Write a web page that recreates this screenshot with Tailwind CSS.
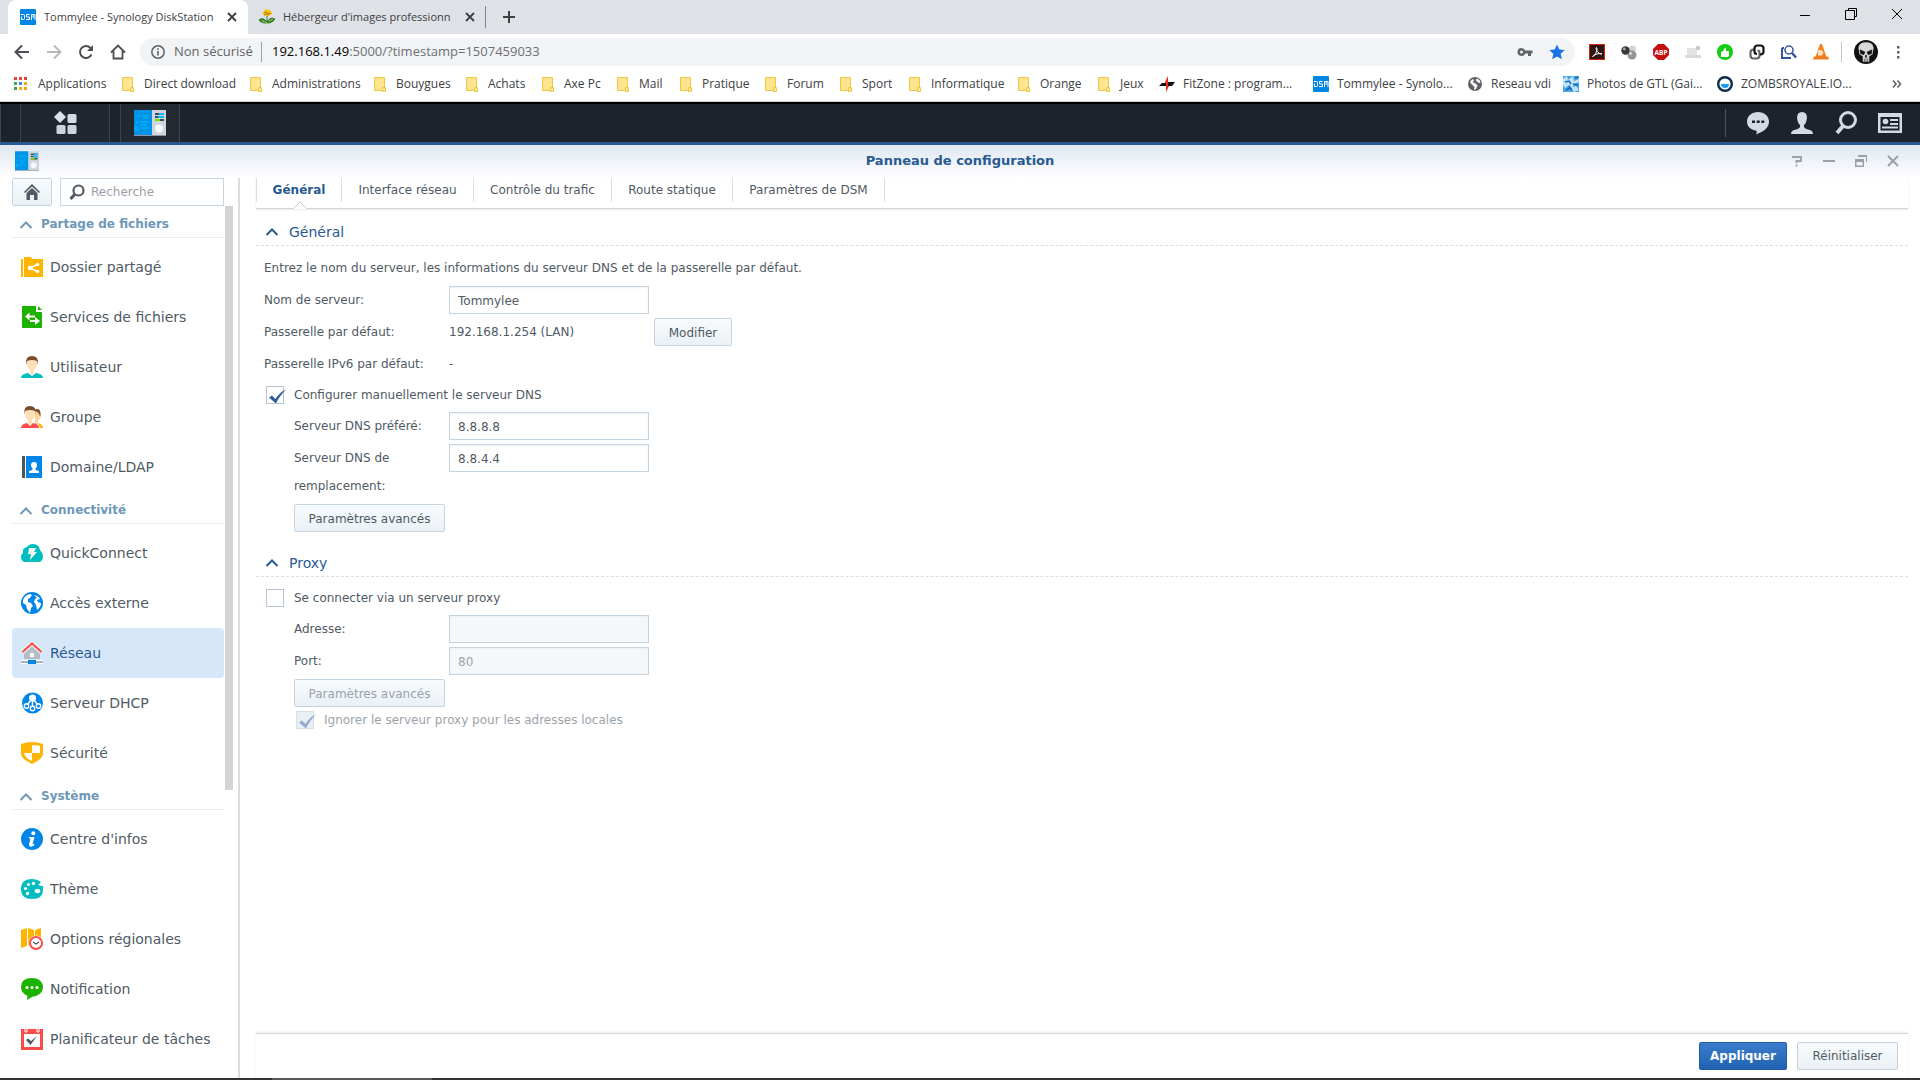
<!DOCTYPE html>
<html lang="fr">
<head>
<meta charset="utf-8">
<title>Tommylee - Synology DiskStation</title>
<script src="https://cdn.jsdelivr.net/npm/@tailwindcss/browser@4"></script>
</head>
<body class="flex h-screen flex-col overflow-hidden bg-white font-['DejaVu_Sans',sans-serif] text-[12px] text-[#505a64]">

<svg class="hidden" aria-hidden="true">
  <defs>
    <symbol id="folder" viewBox="0 0 12 16"><path d="M.5 1.5h10v13H.5z" fill="#ffe58f" stroke="#ecc846"/><path d="M8.500 11.500h3v4h-3z" fill="#ffe58f" stroke="#ecc846"/></symbol>
    <symbol id="dsm" viewBox="0 0 16 16"><rect width="16" height="16" rx="1" fill="#0086e5"/><path d="M1 5.500h2.500q1 0 1 1v3q0 1-1 1H1.500V7.500M9.500 5.500h-3v2.500h3v2.500H6M11.500 11V5.500h3.500V11M13.200 5.500V9" fill="none" stroke="#fff" stroke-width="1"/></symbol>
    <symbol id="panel" viewBox="0 0 32 26"><path d="M0 0h18v25H0z" fill="#0094e8"/><path d="M18 0h14v25H18z" fill="#cfd5db"/><path d="M2 6l1 1 2-2M2 12l1 1 2-2M6 6h9M6 12h9M6 15h6M6 18h9M9 8h5" fill="none" stroke="#00b9ff"/><circle cx="2.500" cy="18.500" r="1.500" fill="none" stroke="#00c8ff"/><path d="M21 3h9v2h-9zM21 6h9v2h-9zM21 9h9v2h-9z" fill="#3d4c58"/><path d="M25 3h5v2h-5zM24 6h6v2h-6z" fill="#00bdf2"/><path d="M21 9h5v2h-5z" fill="#7be000"/><circle cx="25" cy="18.500" r="4" fill="#f4fafb"/><path d="M0 25h32v1H0z" fill="#8b98a3"/></symbol>
    <symbol id="close" viewBox="0 0 10 10"><path d="M1 1l8 8M9 1L1 9" fill="none" stroke="currentColor" stroke-width="1.800"/></symbol>
    <symbol id="up" viewBox="0 0 14 10"><path d="M1.500 8L7 2.500 12.500 8" fill="none" stroke="currentColor" stroke-width="2"/></symbol>
    <symbol id="check" viewBox="0 0 20 18"><path d="M2 9.500l3-2 3.500 3.500C11 7 15 3 19 1.500 15 5.500 11.500 10 9 15.500z" fill="currentColor"/></symbol>
  </defs>
</svg>

<header class="shrink-0 font-['Open_Sans',sans-serif] text-[#3c4043]">
  <div class="flex h-[34px] bg-[#dee1e6] pl-2">
    <div class="flex w-60 items-center justify-between rounded-t-lg bg-white pl-3 pr-[7px]">
      <div class="flex items-center gap-2 whitespace-nowrap text-[11px]"><svg class="size-4 shrink-0"><use href="#dsm"/></svg>Tommylee - Synology DiskStation</div>
      <button class="p-1" aria-label="Fermer l'onglet"><svg class="size-2.5"><use href="#close"/></svg></button>
    </div>
    <div class="my-1.5 flex w-[238px] items-center justify-between border-r border-[#80868b] pl-[11px] pr-1.5">
      <div class="flex items-center gap-2 whitespace-nowrap text-[11px]"><svg class="size-4 shrink-0" viewBox="0 0 16 16"><path d="M8 7v7M8 13C5 9 2 9 0 11c2 3 5 3 8 3 3 0 6-1 8-4-4-2-6 0-8 3z" fill="#3c8a2e" stroke="#1f5a1a" stroke-width=".8"/><path d="M4 3l3-3 4 1 2 3-1 2-4 1-4-1z" fill="#f6c517"/><path d="M5 4l2-1 3 2 2-1M5 6l2-1 3 1" fill="none" stroke="#b77b0b"/><path d="M3 12l3 1 5 2M10 12l4-2" stroke="#8fd060" fill="none"/></svg>Hébergeur d'images professionn</div>
      <button class="p-1" aria-label="Fermer l'onglet"><svg class="size-2.5"><use href="#close"/></svg></button>
    </div>
    <button class="ml-4 self-center" aria-label="Nouvel onglet"><svg class="size-3.5" viewBox="0 0 14 14"><path d="M7 1v12M1 7h12" stroke="#3c4043" stroke-width="2"/></svg></button>
    <div class="ml-auto flex">
      <button class="flex w-[46px] items-center justify-center pb-1" aria-label="Réduire"><svg class="size-2.5" viewBox="0 0 10 10"><path d="M0 5.500h10" stroke="#000"/></svg></button>
      <button class="flex w-[46px] items-center justify-center pb-1.5" aria-label="Restaurer"><svg class="size-3" viewBox="0 0 12 12"><path d="M3.500 2.500v-2h8v8h-2M.5 2.500h9v9h-9z" fill="none" stroke="#000"/></svg></button>
      <button class="flex w-[46px] items-center justify-center pb-1.5" aria-label="Fermer"><svg class="size-3" viewBox="0 0 12 12"><path d="M1 1l10 10M11 1L1 11" stroke="#000"/></svg></button>
    </div>
  </div>
  <div class="flex h-9 items-center bg-white pl-3.5 pr-4">
    <button class="w-8" aria-label="Retour"><svg class="size-4" viewBox="0 0 16 16"><path d="M15 8H2M8 1.500L1.500 8 8 14.500" fill="none" stroke="#4b4f54" stroke-width="2"/></svg></button>
    <button class="w-8" aria-label="Avancer"><svg class="size-4" viewBox="0 0 16 16"><path d="M1 8h13M8 1.500L14.500 8 8 14.500" fill="none" stroke="#b7babd" stroke-width="2"/></svg></button>
    <button class="w-8" aria-label="Actualiser"><svg class="size-4" viewBox="0 0 16 16"><path d="M13.500 10.500A6 6 0 1 1 12.500 4" fill="none" stroke="#4b4f54" stroke-width="2"/><path d="M15 1v6H9z" fill="#4b4f54"/></svg></button>
    <button class="w-[30px]" aria-label="Accueil"><svg class="size-4" viewBox="0 0 16 16"><path d="M1 8.500L8 1.500l7 7M3.500 7v7.500h9V7" fill="none" stroke="#4b4f54" stroke-width="1.800"/></svg></button>
    <div class="flex h-7 flex-1 items-center rounded-full bg-[#f1f3f4] px-2.5">
      <svg class="size-4" viewBox="0 0 16 16"><circle cx="8" cy="8" r="6.200" fill="none" stroke="#5f6368" stroke-width="1.500"/><path d="M8 7v4.500M8 4.200v1.600" stroke="#5f6368" stroke-width="1.600"/></svg>
      <span class="ml-2 w-20 whitespace-nowrap text-[13px] text-[#5f6368]">Non sécurisé</span>
      <span class="ml-[7px] h-5 w-px bg-[#9aa0a6]"></span>
      <div class="ml-2.5 flex-1 text-[13px] text-[#6c7075]" role="textbox" contenteditable="true" spellcheck="false" aria-label="Adresse du site"><span class="text-black">192.168.1.49</span>:5000/?timestamp=1507459033</div>
      <svg class="mr-4 h-4 w-4" viewBox="0 0 16 16"><path d="M4.500 4a4 4 0 1 0 3.700 5.500H11V12h3V9.500h1.500v-3H8.200A4 4 0 0 0 4.500 4zm0 2.500a1.500 1.500 0 1 1 0 3 1.500 1.500 0 0 1 0-3z" fill="#5f6368"/></svg>
      <svg class="size-4" viewBox="0 0 16 16"><path d="M8 .5l2.300 5 5.400.6-4 3.700 1.100 5.400L8 12.500l-4.800 2.700 1.100-5.400-4-3.700 5.400-.6z" fill="#1a73e8"/></svg>
    </div>
    <div class="ml-3.5 flex items-center gap-4">
      <svg class="size-4" viewBox="0 0 16 16"><path d="M.5.500h15v15H.5z" fill="#301515" stroke="#d3210b"/><path d="M3.500 12.500C7 11 9 5 7.500 3.500 6 5 9 10 13 10c-3-1-7 0-9.500 2.500z" fill="none" stroke="#fff"/></svg>
      <svg class="size-4" viewBox="0 0 16 16"><circle cx="11.500" cy="5" r="3.500" fill="#d2d2d2"/><circle cx="11" cy="11" r="4.500" fill="#949494"/><circle cx="4.500" cy="6.500" r="4.200" fill="#383838"/><circle cx="3.300" cy="5" r="1.400" fill="#aaa"/><circle cx="9.500" cy="9.500" r="1.400" fill="#ddd"/></svg>
      <svg class="size-4" viewBox="0 0 16 16"><path d="M5 0h6l5 5v6l-5 5H5l-5-5V5z" fill="#c70d0d"/><text x="8" y="10.500" font-size="6.500" font-weight="700" text-anchor="middle" fill="#fff">ABP</text></svg>
      <svg class="size-4" viewBox="0 0 16 16"><path d="M2 4h10v7H2z" fill="#e4e4e4"/><path d="M0 11h16v3H0z" fill="#dadada"/><circle cx="13" cy="4" r="2.300" fill="#c7c7c7"/></svg>
      <svg class="size-4" viewBox="0 0 16 16"><circle cx="8" cy="8" r="8" fill="#12cd12"/><path d="M4 7.500h2L8 3.500q1.500.5 1 3.500h3v5l-1 1H4z" fill="#fff"/></svg>
      <svg class="size-4" viewBox="0 0 16 16"><g fill="none" stroke-width="2.200"><path d="M5 5.500H4.500a3 3 0 0 0-3 3v3a3 3 0 0 0 3 3h3a3 3 0 0 0 3-3V8.500q0-2-2-2" stroke="#666"/><path d="M11 10.500h.5a3 3 0 0 0 3-3v-3a3 3 0 0 0-3-3h-3a3 3 0 0 0-3 3v3q0 2.500 2.500 2.500" stroke="#111"/></g></svg>
      <svg class="size-4" viewBox="0 0 16 16"><g fill="none" stroke="#34559c"><path d="M1 4v10h9M3 4H1" stroke-width="2"/><circle cx="8" cy="6" r="4" stroke-width="1.500"/><path d="M11 9l4 4.500" stroke-width="2.500"/></g></svg>
      <svg class="size-4" viewBox="0 0 16 16"><path d="M7 0h2l4.500 13h-11z" fill="#f58220"/><path d="M5.500 6h3l2 3-2 2.500H5V9H4.500z" fill="#fbe3cb"/><path d="M1 12.500h14l1 3H0z" fill="#ef7c1c"/></svg>
    </div>
    <span class="ml-3 h-5 w-px bg-[#c4c7ca]"></span>
    <svg class="ml-3 size-6" viewBox="0 0 22 22"><circle cx="11" cy="11" r="11" fill="#111"/><path d="M4 7q1-5 7-5t7 5l-1 6-3 2v5H8v-5l-3-2z" fill="#d8d8d8"/><path d="M5.500 9l4.500 2-1 2.500-3-1zM16.500 9L12 11l1 2.500 3-1zM10.500 14h1v2h-1zM9.500 17v3M11 17v3M12.500 17v3" fill="#111" stroke="#111" stroke-width=".5"/></svg>
    <button class="ml-2.5 w-4" aria-label="Menu"><svg class="h-4 w-4" viewBox="0 0 16 16"><path d="M9 2h2.500v2.500H9zM9 7h2.500v2.500H9zM9 12h2.500v2.500H9z" fill="#5f6368"/></svg></button>
  </div>
  <nav class="flex h-8 items-center whitespace-nowrap bg-white pb-1 pl-3.5 text-[12px]" aria-label="Favoris">
    <a href="#" class="flex w-27 items-center gap-2.5"><svg class="size-3.5" viewBox="0 0 14 14"><path d="M0 0h3v3H0zM5 0h3v3H5zM10 0h3v3h-3z" fill="#ea4335"/><path d="M0 5h3v3H0z" fill="#34a853"/><path d="M5 5h3v3H5z" fill="#4285f4"/><path d="M10 5h3v3h-3zM5 10h3v3H5zM10 10h3v3h-3z" fill="#fbaa05"/><path d="M0 10h3v3H0z" fill="#34a853"/></svg>Applications</a>
    <a href="#" class="flex w-32 items-center gap-2.5"><svg class="h-4 w-3"><use href="#folder"/></svg>Direct download</a>
    <a href="#" class="flex w-31 items-center gap-2.5"><svg class="h-4 w-3"><use href="#folder"/></svg>Administrations</a>
    <a href="#" class="flex w-[92px] items-center gap-2.5"><svg class="h-4 w-3"><use href="#folder"/></svg>Bouygues</a>
    <a href="#" class="flex w-19 items-center gap-2.5"><svg class="h-4 w-3"><use href="#folder"/></svg>Achats</a>
    <a href="#" class="flex w-[75px] items-center gap-2.5"><svg class="h-4 w-3"><use href="#folder"/></svg>Axe Pc</a>
    <a href="#" class="flex w-[63px] items-center gap-2.5"><svg class="h-4 w-3"><use href="#folder"/></svg>Mail</a>
    <a href="#" class="flex w-[85px] items-center gap-2.5"><svg class="h-4 w-3"><use href="#folder"/></svg>Pratique</a>
    <a href="#" class="flex w-[75px] items-center gap-2.5"><svg class="h-4 w-3"><use href="#folder"/></svg>Forum</a>
    <a href="#" class="flex w-[69px] items-center gap-2.5"><svg class="h-4 w-3"><use href="#folder"/></svg>Sport</a>
    <a href="#" class="flex w-[109px] items-center gap-2.5"><svg class="h-4 w-3"><use href="#folder"/></svg>Informatique</a>
    <a href="#" class="flex w-20 items-center gap-2.5"><svg class="h-4 w-3"><use href="#folder"/></svg>Orange</a>
    <a href="#" class="flex w-[61px] items-center gap-2.5"><svg class="h-4 w-3"><use href="#folder"/></svg>Jeux</a>
    <a href="#" class="flex w-[154px] items-center gap-2"><svg class="size-4" viewBox="0 0 16 16"><path d="M6 6L9 0v6h1v4l-3 6V10z" fill="#ea2a1c"/><path d="M0 10l3-3h4v3zM9 6h7l-3 4H9z" fill="#111"/></svg>FitZone : program...</a>
    <a href="#" class="flex w-[154px] items-center gap-2"><svg class="size-4"><use href="#dsm"/></svg>Tommylee - Synolo...</a>
    <a href="#" class="flex w-24 items-center gap-2"><svg class="size-4" viewBox="0 0 16 16"><circle cx="8" cy="8" r="7" fill="#5f6368"/><path d="M3 6.500q1-3 3-3.500l1 1.500L5.500 6l3 1.500 2 2-1.500 3.500-2 1 .5-3-2.500-2.500zM9.500 2.500l3 1.500 1 3-2.500-.5L9 4.500z" fill="#fff"/></svg>Reseau vdi</a>
    <a href="#" class="flex w-[154px] items-center gap-2"><svg class="size-4" viewBox="0 0 16 16"><path d="M0 0h16v16H0z" fill="#4aa3e6"/><path d="M0 3l4-3 1 4 5-4 1 5 5-2v3l-5 2-2 5-3-4-4 3-2-3zM8 12l5-2 3 4-5 2z" fill="#bfe3fb"/><path d="M2 6l4-1 2 3M10 8l5 1M3 14l4-2M12 2l3-1M6 10l3 4" stroke="#1669b8" fill="none" stroke-width="1.500"/></svg>Photos de GTL (Gai...</a>
    <a href="#" class="flex w-40 items-center gap-2"><svg class="size-4" viewBox="0 0 16 16"><circle cx="8" cy="8" r="6.800" fill="#fff" stroke="#0c2a4c" stroke-width="2.400"/><path d="M4 8h8a4 4 0 0 1-8 0z" fill="#1c9bf0"/></svg>ZOMBSROYALE.IO...</a>
    <button class="ml-auto mr-[18px]" aria-label="Autres favoris"><svg class="h-2.5 w-2.5" viewBox="0 0 10 10"><path d="M1 1.500L4 5 1 8.500M5.500 1.500l3 3.500-3 3.500" fill="none" stroke="#5f6368" stroke-width="1.600"/></svg></button>
  </nav>
</header>

<div class="flex h-[43px] shrink-0 border-b-3 border-t-2 border-b-[#285a91] border-t-black bg-[#1d232b] shadow-[0_-1px_0_#d5d7d9]">
  <span class="w-[21px] border-x border-[#3b434c]"></span>
  <button class="flex w-[89px] items-center justify-center border-r border-[#3b434c] bg-[#20272f]" aria-label="Menu principal"><svg class="size-6" viewBox="0 0 24 24"><path d="M7 0l6 6-6 6-6-6z" fill="#dbe3ee"/><rect x="14.500" y="3" width="9" height="9" rx="1.500" fill="#d3dbe4"/><rect x="3.500" y="14" width="9" height="9" rx="1.500" fill="#ccd4dc"/><rect x="14.500" y="14" width="9" height="9" rx="1.500" fill="#ccd4dc"/></svg></button>
  <button class="ml-2.5 flex w-[60px] items-center justify-center border-x border-[#3b434c] bg-[#222931]" aria-label="Panneau de configuration"><svg class="h-[26px] w-8"><use href="#panel"/></svg></button>
  <div class="ml-auto flex items-center pr-[18px]">
    <span class="h-7 w-px bg-[#4b525a]"></span>
    <button class="ml-5" aria-label="Notifications"><svg class="size-6" viewBox="0 0 24 24"><path d="M12 1c6 0 11 4 11 9.500 0 6-5 10-13 13 1-2 1-3 0-4C5 19 1 15.500 1 10.500 1 5 6 1 12 1z" fill="#d2dae4"/><path d="M6 9.500h3v2.500H6zM10.700 9.500h3v2.500h-3zM15.300 9.500h3v2.500h-3z" fill="#1d232b"/></svg></button>
    <button class="ml-5" aria-label="Options"><svg class="size-6" viewBox="0 0 24 24"><path d="M12 1q5 0 5 6-1 6-3 7v2q1 2 6 3 3 1 3 4H1q0-3 3-4 5-1 6-3v-2q-2-1-3-7 0-6 5-6z" fill="#d2dae4"/></svg></button>
    <button class="ml-5" aria-label="Rechercher"><svg class="size-6" viewBox="0 0 24 24"><ellipse cx="14" cy="9" rx="7.500" ry="7.500" fill="none" stroke="#d2dae4" stroke-width="3"/><path d="M9 15l-6 7" stroke="#d2dae4" stroke-width="4"/></svg></button>
    <button class="ml-5" aria-label="Widgets"><svg class="size-6" viewBox="0 0 24 24"><path d="M0 2h24v20H0z" fill="#d2dae4"/><path d="M2.500 6h19v13.500h-19z" fill="#1d232b"/><circle cx="7.500" cy="10.500" r="2.800" fill="#d2dae4"/><path d="M12 8h8v2h-8zM12 12h8v2h-8zM4 15.500h16v2H4z" fill="#d2dae4"/></svg></button>
  </div>
</div>

<div class="flex min-h-0 flex-1 flex-col">
  <div class="grid h-[33px] shrink-0 grid-cols-[1fr_auto_1fr] items-center bg-linear-to-b from-[#e0e7f2] to-white pb-0.5 pl-[15px] pr-[21px]">
    <svg class="h-5 w-6"><use href="#panel"/></svg>
    <h1 class="pl-1.5 text-center text-[13px] font-bold text-[#285a91]">Panneau de configuration</h1>
    <div class="flex justify-end gap-5 text-[#9aa1a8]">
      <button aria-label="Aide"><svg class="size-3" viewBox="0 0 12 12"><path d="M1 2h9v4H5.500v2M5.500 9.500v2" fill="none" stroke="currentColor" stroke-width="1.800"/></svg></button>
      <button aria-label="Réduire"><svg class="size-3" viewBox="0 0 12 12"><path d="M0 6h12" stroke="currentColor" stroke-width="2"/></svg></button>
      <button aria-label="Restaurer"><svg class="size-3" viewBox="0 0 12 12"><path d="M3 0h9v7h-1V2H3zM0 4h9v8H0zM1.500 7v3.500h6V7z" fill="currentColor" fill-rule="evenodd"/></svg></button>
      <button aria-label="Fermer"><svg class="size-3" viewBox="0 0 12 12"><path d="M1 1l10 10M11 1L1 11" stroke="currentColor" stroke-width="2"/></svg></button>
    </div>
  </div>

  <div class="flex min-h-0 flex-1">
    <aside class="flex w-60 shrink-0 flex-col border-r-2 border-[#dcdcdc] pl-3">
      <div class="flex h-7 shrink-0 gap-2 pr-3.5">
        <button class="flex w-10 items-center justify-center rounded-xs border border-[#c6d4e0] bg-linear-to-b from-[#f7fbfe] to-[#ebf1f6]" aria-label="Accueil"><svg class="size-4" viewBox="0 0 16 16"><path d="M0 8L8 0l8 8-1 1-7-6.500L1 9z" fill="#505a64"/><path d="M2.500 9L8 4l5.500 5v7H10v-5H6v5H2.500z" fill="#505a64"/></svg></button>
        <div class="flex flex-1 items-center border border-[#c6d4e0] bg-white pl-2">
          <svg class="size-4 shrink-0" viewBox="0 0 16 16"><circle cx="9.500" cy="6.500" r="5" fill="none" stroke="#505a64" stroke-width="2.200"/><path d="M6 10l-4.500 5" stroke="#505a64" stroke-width="3"/></svg>
          <input type="text" aria-label="Recherche" placeholder="Recherche" class="ml-1.5 w-0 flex-1 text-[12px] outline-none placeholder:text-[#9aa1a8]">
        </div>
      </div>
      <div class="flex min-h-0 flex-1 overflow-hidden">
        <nav class="w-[212px] shrink-0 text-[14px]">
          <h2 class="mb-1 flex h-8 items-center gap-2 border-b border-[#ebedef] pl-[7px] pt-1 text-[12px] font-bold text-[#6e97b9]"><svg class="mt-0.5 h-2.5 w-3.5"><use href="#up"/></svg>Partage de fichiers</h2>
          <a href="#" class="flex h-[50px] items-center gap-[7px] pl-[9px]"><svg class="size-[22px]" viewBox="0 0 22 22"><path d="M0 3h2v18H0zM3 1h7l1 2h11v18H3z" fill="#ffb400"/><path d="M16.500 8.500L9 12l7.500 3.500" fill="none" stroke="#fff" stroke-width="1.500"/><circle cx="9" cy="12" r="2.400" fill="#fff"/><circle cx="16.500" cy="8.500" r="1.800" fill="#fff"/><circle cx="16.500" cy="15.500" r="1.800" fill="#fff"/></svg>Dossier partagé</a>
          <a href="#" class="flex h-[50px] items-center gap-[7px] pl-[9px]"><svg class="size-[22px]" viewBox="0 0 22 22"><path d="M1 0h14v6h6v16H1z" fill="#1db100"/><path d="M17 0l4 4h-4z" fill="#1db100"/><path d="M7 10.500h7M9 15h6" stroke="#fff" stroke-width="2"/><path d="M8.500 6.500v8L4 10.500zM14 11v8l5-4z" fill="#fff"/></svg>Services de fichiers</a>
          <a href="#" class="flex h-[50px] items-center gap-[7px] pl-[9px]"><svg class="size-[22px]" viewBox="0 0 22 22"><path d="M0 22q0-4 7-5l4 3 4-3q7 1 7 5z" fill="#00bdc0"/><path d="M6 6q0-4 5-4t5 4-1 6l-2 2v3l-2 2.500L9 17v-3l-2-2q-1-2-1-6z" fill="#ffdfb8"/><path d="M5 9Q4 0 11 0t6 9l-1-4q-5-2-10 0z" fill="#7a4d29"/></svg>Utilisateur</a>
          <a href="#" class="flex h-[50px] items-center gap-[7px] pl-[9px]"><svg class="size-[22px]" viewBox="0 0 22 22"><path d="M14 7q4-3 5 1t-2 7v3l-3 1z" fill="#ffd49a"/><path d="M13 4q6-3 6.500 3v4l-2-4z" fill="#7a4d29"/><path d="M17 17q5 1 5 5h-3z" fill="#ffb400"/><path d="M0 22q0-4 6-5l3 3 3-3q6 1 6 5z" fill="#fb4b4b"/><path d="M4 6q0-4 5-4t5 4-1 6l-2 2v3l-2 2.500L7 17v-3l-2-2Q4 10 4 6z" fill="#ffdfb8"/><path d="M3.500 9Q2 0 9 0t5.500 9L14 5Q9 3 4 5z" fill="#7a4d29"/></svg>Groupe</a>
          <a href="#" class="flex h-[50px] items-center gap-[7px] pl-[9px]"><svg class="size-[22px]" viewBox="0 0 22 22"><path d="M1 0h3v22H1z" fill="#4a5560"/><path d="M5 0h16v22H5z" fill="#0086e9"/><path d="M13 6q3 0 3 3 0 2-1.500 3.500V14l3.500 1v2H8v-2l3.500-1v-1.500Q10 11 10 9q0-3 3-3z" fill="#fff"/></svg>Domaine/LDAP</a>

          <h2 class="mb-1 flex h-8 items-center gap-2 border-b border-[#ebedef] pl-[7px] pt-1 text-[12px] font-bold text-[#6e97b9]"><svg class="mt-0.5 h-2.5 w-3.5"><use href="#up"/></svg>Connectivité</h2>
          <a href="#" class="flex h-[50px] items-center gap-[7px] pl-[9px]"><svg class="size-[22px]" viewBox="0 0 22 22"><path d="M5 20q-5 0-5-5 0-3 2-4-1-5 4-6 2-3 6-3 6 0 7 6 3 3 3 6 0 6-5 6z" fill="#00bdc0"/><path d="M8 6h7l-2 4h3l-7 8 1-6H7z" fill="#fff"/></svg>QuickConnect</a>
          <a href="#" class="flex h-[50px] items-center gap-[7px] pl-[9px]"><svg class="size-[22px]" viewBox="0 0 22 22"><circle cx="11" cy="11" r="11" fill="#0086e9"/><path d="M2 8q2-5 7-6l2 1-2 3-2 1v3l3 1 2 3-2 2-1 5-3-4-1-4-3-2zM13 3q5 1 6 4l-3 1 1 2 3 1q0 4-4 7l-1-5-2-3 1-3 2-1z" fill="#fff"/></svg>Accès externe</a>
          <a href="#" aria-current="page" class="flex h-[50px] items-center gap-[7px] rounded-sm bg-[#d6e7f9] pl-[9px] text-[#285a91]"><svg class="size-[22px]" viewBox="0 0 22 22"><path d="M3 10l8-7 8 7v7H3z" fill="#b3bdc7"/><path d="M1.500 10L11 1.500l9.500 8.500" fill="none" stroke="#fff" stroke-width="4"/><path d="M1.500 10L11 1.500l9.500 8.500" fill="none" stroke="#fb4b4b" stroke-width="2.200"/><path d="M9 11h4v4H9z" fill="#fff"/><path d="M0 18h22v4H0z" fill="#fff"/><path d="M0 19h22v2H0z" fill="#a7b1bb"/><path d="M7 18h8v4H7z" fill="#0086e9"/></svg>Réseau</a>
          <a href="#" class="flex h-[50px] items-center gap-[7px] pl-[9px]"><svg class="size-[22px]" viewBox="0 0 22 22"><circle cx="11.500" cy="11" r="10.500" fill="#0086e9"/><circle cx="11.500" cy="6" r="3.500" fill="#fff"/><path d="M10 8l-4 5M11.500 8v6M13 8l4 5" stroke="#fff" stroke-width="1.500"/><g fill="#0086e9" stroke="#fff" stroke-width="1.400"><circle cx="5.500" cy="14" r="2.200"/><circle cx="11.500" cy="16.500" r="2.200"/><circle cx="17.500" cy="14" r="2.200"/></g></svg>Serveur DHCP</a>
          <a href="#" class="flex h-[50px] items-center gap-[7px] pl-[9px]"><svg class="size-[22px]" viewBox="0 0 22 22"><path d="M0 2q11-4 22 0v9q0 6-11 11Q0 17 0 11z" fill="#ffb400"/><path d="M11 3q4 0 8 1v7h-8zM3 11h8v8q-7-3-8-8z" fill="#fff"/><path d="M5 5q3-1 6-1v7H5zM11 11h6q-1 4-6 6z" fill="#ffb400"/></svg>Sécurité</a>

          <h2 class="mb-1 flex h-8 items-center gap-2 border-b border-[#ebedef] pl-[7px] pt-1 text-[12px] font-bold text-[#6e97b9]"><svg class="mt-0.5 h-2.5 w-3.5"><use href="#up"/></svg>Système</h2>
          <a href="#" class="flex h-[50px] items-center gap-[7px] pl-[9px]"><svg class="size-[22px]" viewBox="0 0 22 22"><circle cx="11" cy="11" r="11" fill="#0086e9"/><circle cx="12.300" cy="5.200" r="2" fill="#fff"/><path d="M8 9h5.500l-2 7.500 2-1-.5 2q-5 3-5-1l1.500-6H8z" fill="#fff"/></svg>Centre d'infos</a>
          <a href="#" class="flex h-[50px] items-center gap-[7px] pl-[9px]"><svg class="size-[22px]" viewBox="0 0 22 22"><path d="M11 1q5 0 9 3l-3 3q2 1 5 1v4q0 9-11 9Q0 21 0 11 0 1 11 1z" fill="#00bdc0"/><g fill="#fff"><ellipse cx="16.500" cy="13" rx="2.800" ry="2.200"/><circle cx="6.500" cy="15.500" r="1.700"/><circle cx="4.500" cy="10.500" r="1.600"/><circle cx="7.500" cy="6.500" r="1.600"/><circle cx="12.500" cy="5.500" r="1.700"/></g></svg>Thème</a>
          <a href="#" class="flex h-[50px] items-center gap-[7px] pl-[9px]"><svg class="size-[22px]" viewBox="0 0 22 22"><path d="M0 2l6-2v18l-6 2zM7 0l6 2v17l-6-2zM14 2l6-2v18h-6z" fill="#ffb400"/><circle cx="15" cy="15" r="7.500" fill="#fff"/><circle cx="15" cy="15" r="6" fill="#fff" stroke="#fb4b4b" stroke-width="2"/><path d="M12 14l3 2 3-2" fill="none" stroke="#505a64" stroke-width="1.400"/></svg>Options régionales</a>
          <a href="#" class="flex h-[50px] items-center gap-[7px] pl-[9px]"><svg class="size-[22px]" viewBox="0 0 22 22"><path d="M11 0c7 0 11 4 11 9s-4 9-10 9.500L6 22l.5-4Q0 15 0 9q0-9 11-9z" fill="#1db100"/><g fill="#fff"><circle cx="6" cy="9.500" r="1.500"/><circle cx="11" cy="9.500" r="1.500"/><circle cx="16" cy="9.500" r="1.500"/></g></svg>Notification</a>
          <a href="#" class="flex h-[50px] items-center gap-[7px] pl-[9px]"><svg class="size-[22px]" viewBox="0 0 22 22"><path d="M0 1h22v21H0z" fill="#fb4b4b"/><path d="M3 6h16v13H3z" fill="#fff"/><path d="M4 0h2v4H4zM16 0h2v4h-2z" fill="#fb4b4b" stroke="#fff"/><path d="M5 12l2-1.500 3 2.500 6-5-6.500 9z" fill="#505a64"/></svg>Planificateur de tâches</a>
        </nav>
        <span class="ml-px h-[584px] w-2 bg-[#d2d4d6]"></span>
      </div>
    </aside>

    <main class="flex min-w-0 flex-1 flex-col pl-4 pr-3">
      <nav class="flex h-[31px] shrink-0 items-start border-b border-[#d5d5d5] shadow-[0_1px_2px_#e8e8e8]">
        <a href="#" aria-current="page" class="relative h-6 w-[86px] border-x border-[#d5e0ea] text-center leading-6 font-bold text-[#285a91]">Général<svg class="absolute -bottom-[7px] left-9 h-2 w-3.5" viewBox="0 0 14 8"><path d="M0 8L7 .5 14 8z" fill="#fff"/><path d="M0 7.500h.5L7 .8l6.500 6.700h.5" fill="none" stroke="#c4c4c4"/></svg></a>
        <a href="#" class="h-6 w-[132px] border-r border-[#d5e0ea] text-center leading-6">Interface réseau</a>
        <a href="#" class="h-6 w-[138px] border-r border-[#d5e0ea] text-center leading-6">Contrôle du trafic</a>
        <a href="#" class="h-6 w-[121px] border-r border-[#d5e0ea] text-center leading-6">Route statique</a>
        <a href="#" class="h-6 w-[152px] border-r border-[#d5e0ea] text-center leading-6">Paramètres de DSM</a>
      </nav>

      <form class="flex-1">
        <h2 class="flex h-[37px] items-center gap-2.5 border-b border-dashed border-[#d5e0ea] pl-[9px] pt-2.5 text-[14px] text-[#285a91]"><svg class="h-2.5 w-3.5"><use href="#up"/></svg>Général</h2>
        <div class="pl-2 pt-1.5">
          <p class="h-8 leading-8">Entrez le nom du serveur, les informations du serveur DNS et de la passerelle par défaut.</p>
          <div class="flex h-8 items-center"><label for="name" class="w-[185px]">Nom de serveur:</label><input id="name" value="Tommylee" class="h-7 w-50 border border-[#c6d4e0] px-2 pt-0.5 shadow-[inset_0_1px_2px_#eceff3]"></div>
          <div class="flex h-8 items-center"><span class="w-[185px]">Passerelle par défaut:</span><span class="w-[205px]">192.168.1.254 (LAN)</span><button type="button" class="h-7 w-[78px] rounded-xs border border-[#c6d4e0] bg-linear-to-b from-[#f7fbfe] to-[#ebf1f6] pt-0.5">Modifier</button></div>
          <div class="flex h-8 items-center"><span class="w-[185px]">Passerelle IPv6 par défaut:</span><span>-</span></div>
          <div class="flex h-[30px] items-center"><span class="relative ml-0.5 mr-2.5 size-[18px]"><input id="manual" type="checkbox" checked class="peer block size-[18px] appearance-none border border-[#b8c4d4] bg-white"><svg class="pointer-events-none absolute left-px top-0.5 hidden h-[18px] w-5 text-[#2b5c9e] peer-checked:block"><use href="#check"/></svg></span><label for="manual">Configurer manuellement le serveur DNS</label></div>
          <div class="pl-[30px]">
            <div class="flex h-8 items-center"><label for="dns1" class="w-[155px]">Serveur DNS préféré:</label><input id="dns1" value="8.8.8.8" class="h-7 w-50 border border-[#c6d4e0] px-2 pt-0.5 shadow-[inset_0_1px_2px_#eceff3]"></div>
            <div class="flex items-start pb-1 pt-0.5"><label for="dns2" class="w-[155px] pr-10 leading-7">Serveur DNS de remplacement:</label><input id="dns2" value="8.8.4.4" class="h-7 w-50 border border-[#c6d4e0] px-2 pt-0.5 shadow-[inset_0_1px_2px_#eceff3]"></div>
            <button type="button" class="block h-7 w-[151px] rounded-xs border border-[#c6d4e0] bg-linear-to-b from-[#f7fbfe] to-[#ebf1f6] pt-0.5">Paramètres avancés</button>
          </div>
        </div>

        <h2 class="mt-2 flex h-[37px] items-center gap-2.5 border-b border-dashed border-[#d5e0ea] pl-[9px] pt-2.5 text-[14px] text-[#285a91]"><svg class="h-2.5 w-3.5"><use href="#up"/></svg>Proxy</h2>
        <div class="pl-2 pt-1.5">
          <div class="flex h-[30px] items-center"><span class="relative ml-0.5 mr-2.5 size-[18px]"><input id="proxy" type="checkbox" class="peer block size-[18px] appearance-none border border-[#b8c4d4] bg-white"><svg class="pointer-events-none absolute left-px top-0.5 hidden h-[18px] w-5 text-[#2b5c9e] peer-checked:block"><use href="#check"/></svg></span><label for="proxy">Se connecter via un serveur proxy</label></div>
          <div class="pl-[30px]">
            <div class="flex h-8 items-center"><label for="addr" class="w-[155px]">Adresse:</label><input id="addr" disabled class="h-7 w-50 border border-[#c6d4e0] bg-[#f6f7f9] px-2 pt-0.5 shadow-[inset_0_1px_2px_#eceff3]"></div>
            <div class="flex h-8 items-center"><label for="port" class="w-[155px]">Port:</label><input id="port" disabled value="80" class="h-7 w-50 border border-[#c6d4e0] bg-[#f6f7f9] px-2 pt-0.5 text-[#9ca3ab] shadow-[inset_0_1px_2px_#eceff3]"></div>
            <button type="button" disabled class="mt-0.5 block h-7 w-[151px] rounded-xs border border-[#c6d4e0] bg-linear-to-b from-[#f7fbfe] to-[#ebf1f6] pt-0.5 text-[#9ca3ab]">Paramètres avancés</button>
            <div class="flex h-[26px] items-center text-[#9ca3ab]"><span class="relative ml-0.5 mr-2.5 size-[18px]"><input id="local" type="checkbox" checked disabled class="peer block size-[18px] appearance-none border border-[#d3dfea] bg-[#e9eff5]"><svg class="pointer-events-none absolute left-px top-0.5 hidden h-[18px] w-5 text-[#93abd0] peer-checked:block"><use href="#check"/></svg></span><label for="local">Ignorer le serveur proxy pour les adresses locales</label></div>
          </div>
        </div>
      </form>

      <footer class="flex h-[45px] shrink-0 items-center justify-end gap-2.5 border-t border-[#d5d5d5] pr-2.5 shadow-[0_-1px_2px_#ececec]">
        <button class="h-7 w-22 rounded-xs border border-[#1d5aa4] bg-linear-to-b from-[#3a7ccb] to-[#2163b2] font-bold text-white">Appliquer</button>
        <button class="h-7 w-[101px] rounded-xs border border-[#c6d0dc] bg-linear-to-b from-[#f7fbfe] to-[#ebf1f6]">Réinitialiser</button>
      </footer>
    </main>
  </div>
</div>
<div class="h-0.5 shrink-0 bg-[#333] pl-[272px]"><div class="h-full w-40 bg-[#595959]"></div></div>
</body>
</html>
